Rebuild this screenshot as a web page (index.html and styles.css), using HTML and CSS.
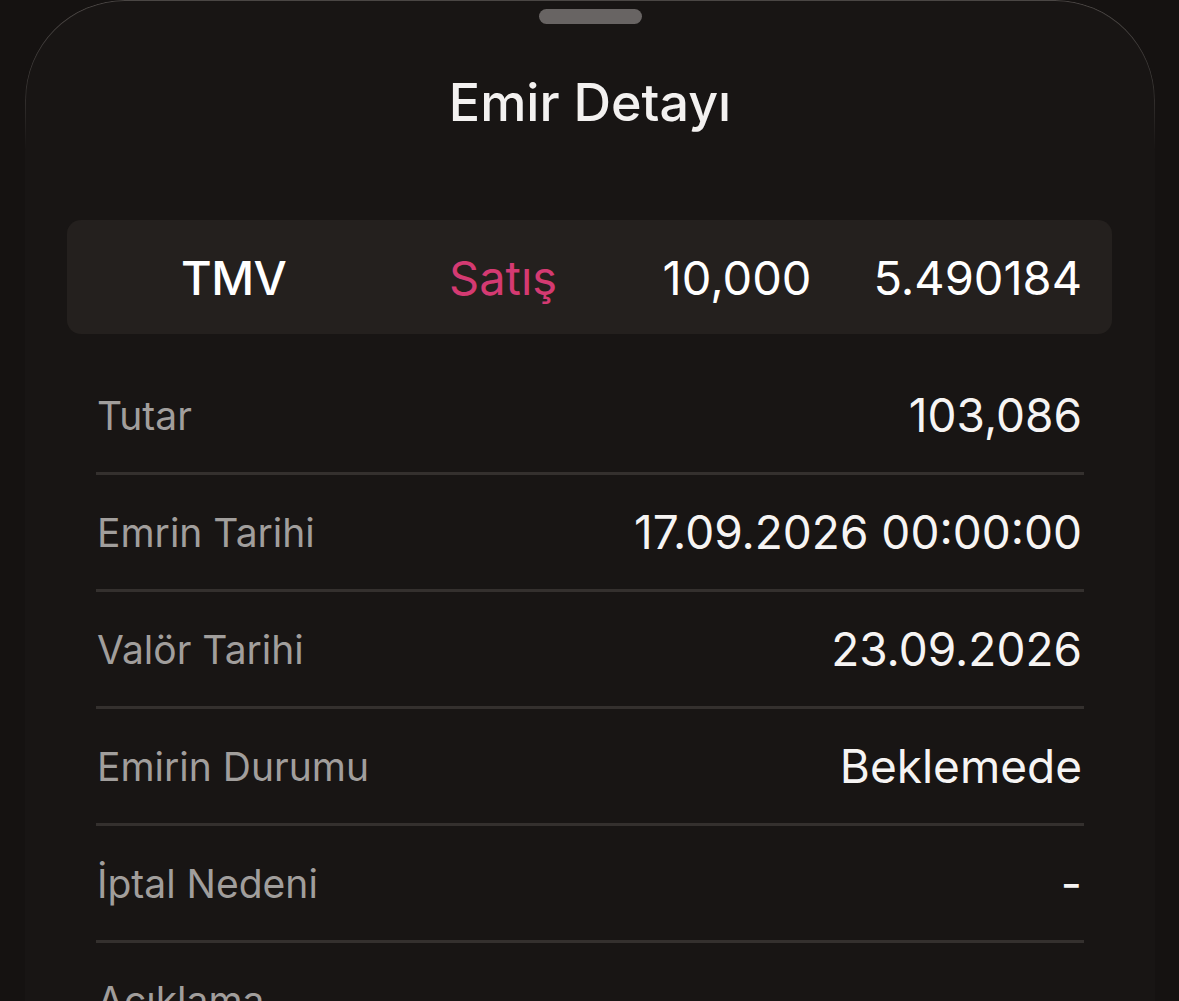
FILE: index.html
```html
<!DOCTYPE html>
<html lang="tr">
<head>
<meta charset="utf-8">
<title>Emir Detayı</title>
<link rel="stylesheet" href="styles.css">
</head>
<body>
<div class="sheet">
  <div class="handle"></div>
  <h1 class="title">Emir Detayı</h1>
  <div class="summary">
    <span class="sym">TMV</span>
    <span class="side">Satış</span>
    <span class="qty">10,000</span>
    <span class="price">5.490184</span>
  </div>
  <div class="rows">
    <div class="row"><span class="label">Tutar</span><span class="value">103,086</span></div>
    <div class="row"><span class="label">Emrin Tarihi</span><span class="value">17.09.2026 00:00:00</span></div>
    <div class="row"><span class="label">Valör Tarihi</span><span class="value">23.09.2026</span></div>
    <div class="row"><span class="label">Emirin Durumu</span><span class="value">Beklemede</span></div>
    <div class="row"><span class="label">İptal Nedeni</span><span class="value">-</span></div>
    <div class="row"><span class="label">Açıklama</span><span class="value">-</span></div>
  </div>
</div>
</body>
</html>
```
FILE: styles.css
```css
html, body {
  margin: 0;
  padding: 0;
  height: 100%;
  overflow: hidden;
  background: #151211;
}
body {
  font-family: Inter, "Noto Sans", sans-serif;
  color: #f4f2f1;
}
.sheet {
  position: relative;
  margin-left: 25px;
  width: 1130px;
  min-height: 1100px;
  background: #181514;
  border-radius: 100px 100px 0 0;
  display: flex;
  flex-direction: column;
}
.sheet::before {
  content: "";
  position: absolute;
  inset: 0;
  border: 1.5px solid #4a4644;
  border-bottom: none;
  border-radius: 100px 100px 0 0;
  -webkit-mask-image: linear-gradient(to bottom, #000 0px, rgba(0,0,0,0.6) 90px, transparent 150px);
  mask-image: linear-gradient(to bottom, #000 0px, rgba(0,0,0,0.6) 90px, transparent 150px);
  pointer-events: none;
}
.handle {
  align-self: center;
  margin-top: 9px;
  width: 103px;
  height: 15px;
  border-radius: 8px;
  background: #686463;
}
.title {
  margin: 48px 0 0;
  font-size: 52px;
  line-height: 62px;
  font-weight: 500;
  text-align: center;
  color: #f3f1f0;
}
.summary {
  margin: 86px 43px 0 42px;
  height: 114px;
  border-radius: 14px;
  background: #24201e;
  display: grid;
  grid-template-columns: 268px 1fr auto auto;
  align-items: center;
  padding: 0 30px 0 114px;
  font-size: 47px;
  font-weight: 400;
}
.sym { color: #ffffff; font-weight: 500; letter-spacing: -0.5px; }
.side { color: #d43a72; }
.qty { color: #ffffff; }
.price { color: #ffffff; margin-left: 62px; }
.rows {
  margin: 24px 71px 0 71px;
  display: flex;
  flex-direction: column;
}
.row {
  height: 114px;
  border-bottom: 3px solid #34302e;
  display: flex;
  align-items: center;
  justify-content: space-between;
  padding: 0 2px 0 1px;
}
.label {
  font-size: 39px;
  color: #a19e9c;
}
.value {
  font-size: 46px;
  color: #f6f4f3;
}
```
